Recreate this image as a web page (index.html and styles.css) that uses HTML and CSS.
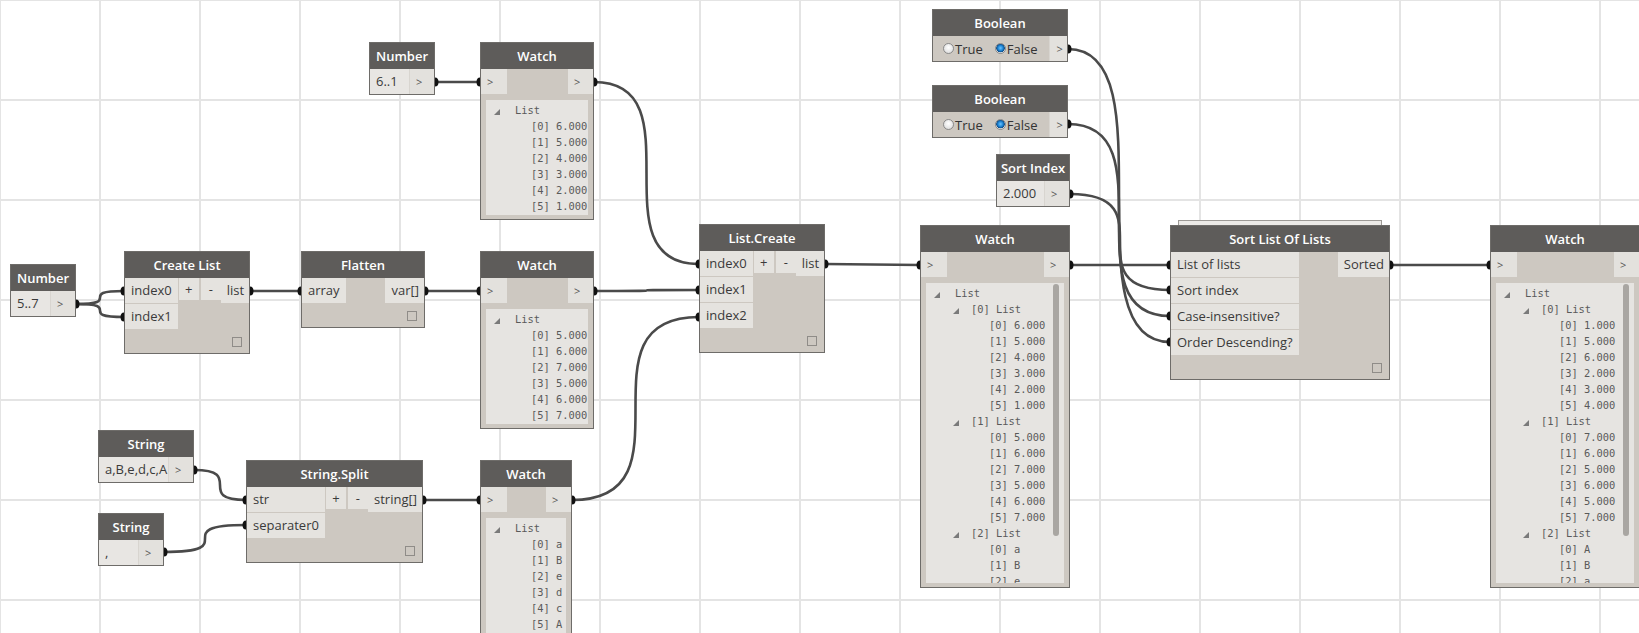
FILE: index.html
```html
<!DOCTYPE html>
<html>
<head>
<meta charset="utf-8">
<title>Dynamo graph</title>
<link rel="stylesheet" href="styles.css">
</head>
<body>
<div class="canvas">
  <svg class="wires" width="1639" height="633" viewBox="0 0 1639 633">
    <g class="w">
      <path d="M76 304 C124 304, 76 291, 124 291"/>
      <path d="M76 304 C124 304, 76 317, 124 317"/>
      <path d="M250 291 L301 291"/>
      <path d="M425 291 L480 291"/>
      <path d="M594 291 C699 291, 594 290, 699 290"/>
      <path d="M435 82 L480 82"/>
      <path d="M594 82 C699 82, 594 264, 699 264"/>
      <path d="M194 470 C246 470, 194 500, 246 500"/>
      <path d="M164 552 C246 552, 164 525, 246 525"/>
      <path d="M423 500 L480 500"/>
      <path d="M572 500 C699 500, 572 317, 699 317"/>
      <path d="M825 264 L920 265"/>
      <path d="M1070 265 L1170 265"/>
      <path d="M1070 194 C1170 194, 1070 290, 1170 290"/>
      <path d="M1068 49 C1170 49, 1068 342, 1170 342"/>
      <path d="M1068 124 C1170 124, 1068 316, 1170 316"/>
      <path d="M1390 265 L1490 265"/>
    </g>
    <g class="d">
      <ellipse cx="76" cy="304" rx="3.5" ry="4.5"/>
      <ellipse cx="124" cy="291" rx="3.5" ry="4.5"/>
      <ellipse cx="124" cy="317" rx="3.5" ry="4.5"/>
      <ellipse cx="250" cy="291" rx="3.5" ry="4.5"/>
      <ellipse cx="301" cy="291" rx="3.5" ry="4.5"/>
      <ellipse cx="425" cy="291" rx="3.5" ry="4.5"/>
      <ellipse cx="480" cy="291" rx="3.5" ry="4.5"/>
      <ellipse cx="594" cy="291" rx="3.5" ry="4.5"/>
      <ellipse cx="699" cy="290" rx="3.5" ry="4.5"/>
      <ellipse cx="435" cy="82" rx="3.5" ry="4.5"/>
      <ellipse cx="480" cy="82" rx="3.5" ry="4.5"/>
      <ellipse cx="594" cy="82" rx="3.5" ry="4.5"/>
      <ellipse cx="699" cy="264" rx="3.5" ry="4.5"/>
      <ellipse cx="194" cy="470" rx="3.5" ry="4.5"/>
      <ellipse cx="246" cy="500" rx="3.5" ry="4.5"/>
      <ellipse cx="164" cy="552" rx="3.5" ry="4.5"/>
      <ellipse cx="246" cy="525" rx="3.5" ry="4.5"/>
      <ellipse cx="423" cy="500" rx="3.5" ry="4.5"/>
      <ellipse cx="480" cy="500" rx="3.5" ry="4.5"/>
      <ellipse cx="572" cy="500" rx="3.5" ry="4.5"/>
      <ellipse cx="699" cy="317" rx="3.5" ry="4.5"/>
      <ellipse cx="825" cy="264" rx="3.5" ry="4.5"/>
      <ellipse cx="920" cy="265" rx="3.5" ry="4.5"/>
      <ellipse cx="1070" cy="265" rx="3.5" ry="4.5"/>
      <ellipse cx="1170" cy="265" rx="3.5" ry="4.5"/>
      <ellipse cx="1070" cy="194" rx="3.5" ry="4.5"/>
      <ellipse cx="1170" cy="290" rx="3.5" ry="4.5"/>
      <ellipse cx="1068" cy="49" rx="3.5" ry="4.5"/>
      <ellipse cx="1170" cy="342" rx="3.5" ry="4.5"/>
      <ellipse cx="1068" cy="124" rx="3.5" ry="4.5"/>
      <ellipse cx="1170" cy="316" rx="3.5" ry="4.5"/>
      <ellipse cx="1390" cy="265" rx="3.5" ry="4.5"/>
      <ellipse cx="1490" cy="265" rx="3.5" ry="4.5"/>
    </g>
  </svg>

  <!-- Number 5..7 -->
  <div class="node n-num1">
    <div class="hd">Number</div>
    <div class="io"><div class="val">5..7</div><div class="arr">&gt;</div></div>
  </div>

  <!-- Number 6..1 -->
  <div class="node n-num2">
    <div class="hd">Number</div>
    <div class="io"><div class="val">6..1</div><div class="arr">&gt;</div></div>
  </div>

  <!-- Create List -->
  <div class="node n-create">
    <div class="hd">Create List</div>
    <div class="ports">
      <div class="ins"><div class="p">index0</div><div class="p">index1</div></div>
      <div class="mid"><div class="btn">+</div><div class="btn">-</div></div>
      <div class="outs"><div class="p out">list</div></div>
    </div>
    <div class="foot"><span class="sq"></span></div>
  </div>

  <!-- Flatten -->
  <div class="node n-flat">
    <div class="hd">Flatten</div>
    <div class="ports">
      <div class="ins"><div class="p">array</div></div>
      <div class="mid"></div>
      <div class="outs"><div class="p out">var[]</div></div>
    </div>
    <div class="foot"><span class="sq"></span></div>
  </div>

  <!-- String a,B,e,d,c,A -->
  <div class="node n-str1">
    <div class="hd">String</div>
    <div class="io"><div class="val">a,B,e,d,c,A</div><div class="arr">&gt;</div></div>
  </div>

  <!-- String , -->
  <div class="node n-str2">
    <div class="hd">String</div>
    <div class="io"><div class="val">,</div><div class="arr">&gt;</div></div>
  </div>

  <!-- String.Split -->
  <div class="node n-split">
    <div class="hd">String.Split</div>
    <div class="ports">
      <div class="ins"><div class="p">str</div><div class="p">separater0</div></div>
      <div class="mid"><div class="btn">+</div><div class="btn">-</div></div>
      <div class="outs"><div class="p out">string[]</div></div>
    </div>
    <div class="foot"><span class="sq"></span></div>
  </div>

  <!-- Watch top -->
  <div class="node watch w-top">
    <div class="hd">Watch</div>
    <div class="wrow"><div class="arr al">&gt;</div><div class="arr">&gt;</div></div>
    <div class="panel ps">
      <div class="ln t0"><span class="tri"></span>List</div>
      <div class="ln i1">[0] 6.000</div>
      <div class="ln i1">[1] 5.000</div>
      <div class="ln i1">[2] 4.000</div>
      <div class="ln i1">[3] 3.000</div>
      <div class="ln i1">[4] 2.000</div>
      <div class="ln i1">[5] 1.000</div>
    </div>
  </div>

  <!-- Watch middle -->
  <div class="node watch w-mid">
    <div class="hd">Watch</div>
    <div class="wrow"><div class="arr al">&gt;</div><div class="arr">&gt;</div></div>
    <div class="panel ps">
      <div class="ln t0"><span class="tri"></span>List</div>
      <div class="ln i1">[0] 5.000</div>
      <div class="ln i1">[1] 6.000</div>
      <div class="ln i1">[2] 7.000</div>
      <div class="ln i1">[3] 5.000</div>
      <div class="ln i1">[4] 6.000</div>
      <div class="ln i1">[5] 7.000</div>
    </div>
  </div>

  <!-- Watch bottom -->
  <div class="node watch w-bot">
    <div class="hd">Watch</div>
    <div class="wrow"><div class="arr al">&gt;</div><div class="arr">&gt;</div></div>
    <div class="panel ps">
      <div class="ln t0"><span class="tri"></span>List</div>
      <div class="ln i1">[0] a</div>
      <div class="ln i1">[1] B</div>
      <div class="ln i1">[2] e</div>
      <div class="ln i1">[3] d</div>
      <div class="ln i1">[4] c</div>
      <div class="ln i1">[5] A</div>
    </div>
  </div>

  <!-- List.Create -->
  <div class="node n-lc">
    <div class="hd">List.Create</div>
    <div class="ports">
      <div class="ins"><div class="p">index0</div><div class="p">index1</div><div class="p">index2</div></div>
      <div class="mid"><div class="btn">+</div><div class="btn">-</div></div>
      <div class="outs"><div class="p out">list</div></div>
    </div>
    <div class="foot"><span class="sq"></span></div>
  </div>

  <!-- Watch big -->
  <div class="node watch w-big">
    <div class="hd">Watch</div>
    <div class="wrow"><div class="arr al">&gt;</div><div class="arr">&gt;</div></div>
    <div class="panel pb">
      <div class="ln t0"><span class="tri"></span>List</div>
      <div class="ln t1"><span class="tri"></span>[0] List</div>
      <div class="ln i2">[0] 6.000</div>
      <div class="ln i2">[1] 5.000</div>
      <div class="ln i2">[2] 4.000</div>
      <div class="ln i2">[3] 3.000</div>
      <div class="ln i2">[4] 2.000</div>
      <div class="ln i2">[5] 1.000</div>
      <div class="ln t1"><span class="tri"></span>[1] List</div>
      <div class="ln i2">[0] 5.000</div>
      <div class="ln i2">[1] 6.000</div>
      <div class="ln i2">[2] 7.000</div>
      <div class="ln i2">[3] 5.000</div>
      <div class="ln i2">[4] 6.000</div>
      <div class="ln i2">[5] 7.000</div>
      <div class="ln t1"><span class="tri"></span>[2] List</div>
      <div class="ln i2">[0] a</div>
      <div class="ln i2">[1] B</div>
      <div class="ln i2">[2] e</div>
      <div class="scroll"></div>
    </div>
  </div>

  <!-- Booleans -->
  <div class="node n-b1">
    <div class="hd">Boolean</div>
    <div class="io">
      <div class="radios"><span class="rb"></span><span class="rl">True</span><span class="rb on"></span><span class="rl">False</span></div>
      <div class="arr">&gt;</div>
    </div>
  </div>
  <div class="node n-b2">
    <div class="hd">Boolean</div>
    <div class="io">
      <div class="radios"><span class="rb"></span><span class="rl">True</span><span class="rb on"></span><span class="rl">False</span></div>
      <div class="arr">&gt;</div>
    </div>
  </div>

  <!-- Sort Index -->
  <div class="node n-si">
    <div class="hd">Sort Index</div>
    <div class="io"><div class="val">2.000</div><div class="arr">&gt;</div></div>
  </div>

  <!-- Sort List Of Lists -->
  <div class="stack"></div>
  <div class="node n-sort">
    <div class="hd">Sort List Of Lists</div>
    <div class="ports">
      <div class="ins">
        <div class="p">List of lists</div>
        <div class="p">Sort index</div>
        <div class="p">Case-insensitive?</div>
        <div class="p">Order Descending?</div>
      </div>
      <div class="mid"></div>
      <div class="outs"><div class="p out">Sorted</div></div>
    </div>
    <div class="foot"><span class="sq"></span></div>
  </div>

  <!-- Watch right -->
  <div class="node watch w-right">
    <div class="hd">Watch</div>
    <div class="wrow"><div class="arr al">&gt;</div><div class="arr">&gt;</div></div>
    <div class="panel pb">
      <div class="ln t0"><span class="tri"></span>List</div>
      <div class="ln t1"><span class="tri"></span>[0] List</div>
      <div class="ln i2">[0] 1.000</div>
      <div class="ln i2">[1] 5.000</div>
      <div class="ln i2">[2] 6.000</div>
      <div class="ln i2">[3] 2.000</div>
      <div class="ln i2">[4] 3.000</div>
      <div class="ln i2">[5] 4.000</div>
      <div class="ln t1"><span class="tri"></span>[1] List</div>
      <div class="ln i2">[0] 7.000</div>
      <div class="ln i2">[1] 6.000</div>
      <div class="ln i2">[2] 5.000</div>
      <div class="ln i2">[3] 6.000</div>
      <div class="ln i2">[4] 5.000</div>
      <div class="ln i2">[5] 7.000</div>
      <div class="ln t1"><span class="tri"></span>[2] List</div>
      <div class="ln i2">[0] A</div>
      <div class="ln i2">[1] B</div>
      <div class="ln i2">[2] a</div>
      <div class="scroll"></div>
    </div>
  </div>
</div>
</body>
</html>
```

FILE: styles.css
```css
* { box-sizing: border-box; }
html, body { margin: 0; padding: 0; background: #ffffff; }
body { font-family: "Open Sans", "Liberation Sans", sans-serif; }

.canvas {
  position: relative;
  width: 1639px;
  height: 633px;
  overflow: hidden;
  background-color: #ffffff;
  background-image:
    linear-gradient(to right, #e4e4e4 2px, transparent 2px),
    linear-gradient(to bottom, #e4e4e4 2px, transparent 2px);
  background-size: 100px 100px;
  background-position: -1px -1px;
}

.wires { position: absolute; left: 0; top: 0; }
.wires .w path { fill: none; stroke: #4a4a4a; stroke-width: 2.6; }
.wires .d ellipse { fill: #111111; }

.node {
  position: absolute;
  background: #cdc8c1;
  border: 1px solid #6e6c69;
  color: #3a3a3a;
  font-size: 13px;
}
.hd {
  height: 26px;
  line-height: 26px;
  background: #5e5c5a;
  color: #ffffff;
  font-weight: 600;
  font-size: 13px;
  text-align: center;
  white-space: nowrap;
  overflow: hidden;
}

/* value nodes */
.io { display: flex; height: 25px; }
.val {
  flex: 1;
  background: #e8e6e3;
  line-height: 25px;
  padding-left: 6px;
  white-space: nowrap;
  overflow: hidden;
}
.arr {
  width: 25px;
  background: #e3e1dd;
  border-left: 1px solid #d8d5d0;
  color: #555555;
  font-size: 11px;
  line-height: 25px;
  text-align: left;
  padding-left: 6px;
}

/* ports nodes */
.ports { display: flex; }
.ins, .outs { display: flex; flex-direction: column; gap: 1px; }
.p {
  height: 25px;
  line-height: 25px;
  padding: 0 6px;
  background: #e5e3df;
  white-space: nowrap;
}
.p.out { text-align: right; padding: 0 5px 0 6px; }
.mid { flex: 1; display: flex; gap: 2px; padding-left: 1px; align-items: flex-start; }
.btn {
  width: 20px;
  height: 22px;
  line-height: 22px;
  text-align: center;
  background: #e5e3df;
}
.foot {
  height: 24px;
  display: flex;
  justify-content: flex-end;
  align-items: center;
  padding-right: 7px;
}
.sq {
  width: 10px;
  height: 10px;
  border: 1px solid #8f8c88;
  margin-top: 2px;
}

/* watch nodes */
.wrow { display: flex; justify-content: space-between; height: 25px; }
.wrow .arr { border-left: none; }
.wrow .arr.al { width: 26px; }
.panel {
  position: relative;
  margin: 6px 5px 4px 5px;
  background: #e6e4e1;
  padding-top: 2px;
  overflow: hidden;
  font-family: "DejaVu Sans Mono", "Liberation Mono", monospace;
  font-size: 10.4px;
  color: #5a5a5a;
}
.panel.ps { height: 115px; }
.panel.pb { height: 300px; }
.ln { height: 16px; line-height: 16px; white-space: nowrap; }
.t0 { padding-left: 8px; }
.t1 { padding-left: 27px; }
.i1 { padding-left: 45px; }
.i2 { padding-left: 63px; }
.tri {
  display: inline-block;
  width: 0;
  height: 0;
  border-left: 6px solid transparent;
  border-bottom: 6px solid #7a7a7a;
  margin-right: 12px;
  vertical-align: -1px;
}
.t0 .tri { margin-right: 15px; }
.scroll {
  position: absolute;
  right: 5px;
  top: 1px;
  width: 6px;
  height: 252px;
  border-radius: 3px;
  background: #a9a6a2;
}

/* boolean */
.radios {
  flex: 1;
  display: flex;
  align-items: center;
  padding-left: 10px;
  color: #333333;
}
.rb {
  width: 11px;
  height: 11px;
  border-radius: 50%;
  border: 1px solid #8a8a8a;
  background: radial-gradient(circle at 50% 40%, #ffffff 0, #e6e6e6 60%, #cfcfcf 100%);
}
.rb.on {
  background: radial-gradient(circle at 50% 45%, #6cc4ff 0, #1f86d6 2.5px, #0f4f8a 4px, #e8e8e8 4.6px, #d8d8d8 100%);
}
.rl { margin-left: 1px; margin-right: 12px; }

/* positions on the canvas */
.n-num1 { left: 10px; top: 264px; width: 66px; }
.n-num2 { left: 369px; top: 42px; width: 66px; }
.n-create { left: 124px; top: 251px; width: 126px; }
.n-flat { left: 301px; top: 251px; width: 124px; }
.n-str1 { left: 98px; top: 430px; width: 96px; }
.n-str2 { left: 98px; top: 513px; width: 66px; }
.n-split { left: 246px; top: 460px; width: 177px; }
.w-top { left: 480px; top: 42px; width: 114px; }
.w-mid { left: 480px; top: 251px; width: 114px; }
.w-bot { left: 480px; top: 460px; width: 92px; }
.n-lc { left: 699px; top: 224px; width: 126px; }
.w-big { left: 920px; top: 225px; width: 150px; }
.n-b1 { left: 932px; top: 9px; width: 136px; }
.n-b2 { left: 932px; top: 85px; width: 136px; }
.n-si { left: 996px; top: 154px; width: 74px; }
.n-sort { left: 1170px; top: 225px; width: 220px; }
.w-right { left: 1490px; top: 225px; width: 150px; }
.stack {
  position: absolute;
  left: 1178px;
  top: 220px;
  width: 204px;
  height: 12px;
  border: 1px solid #9c9995;
  background: #ebe9e6;
}
```
